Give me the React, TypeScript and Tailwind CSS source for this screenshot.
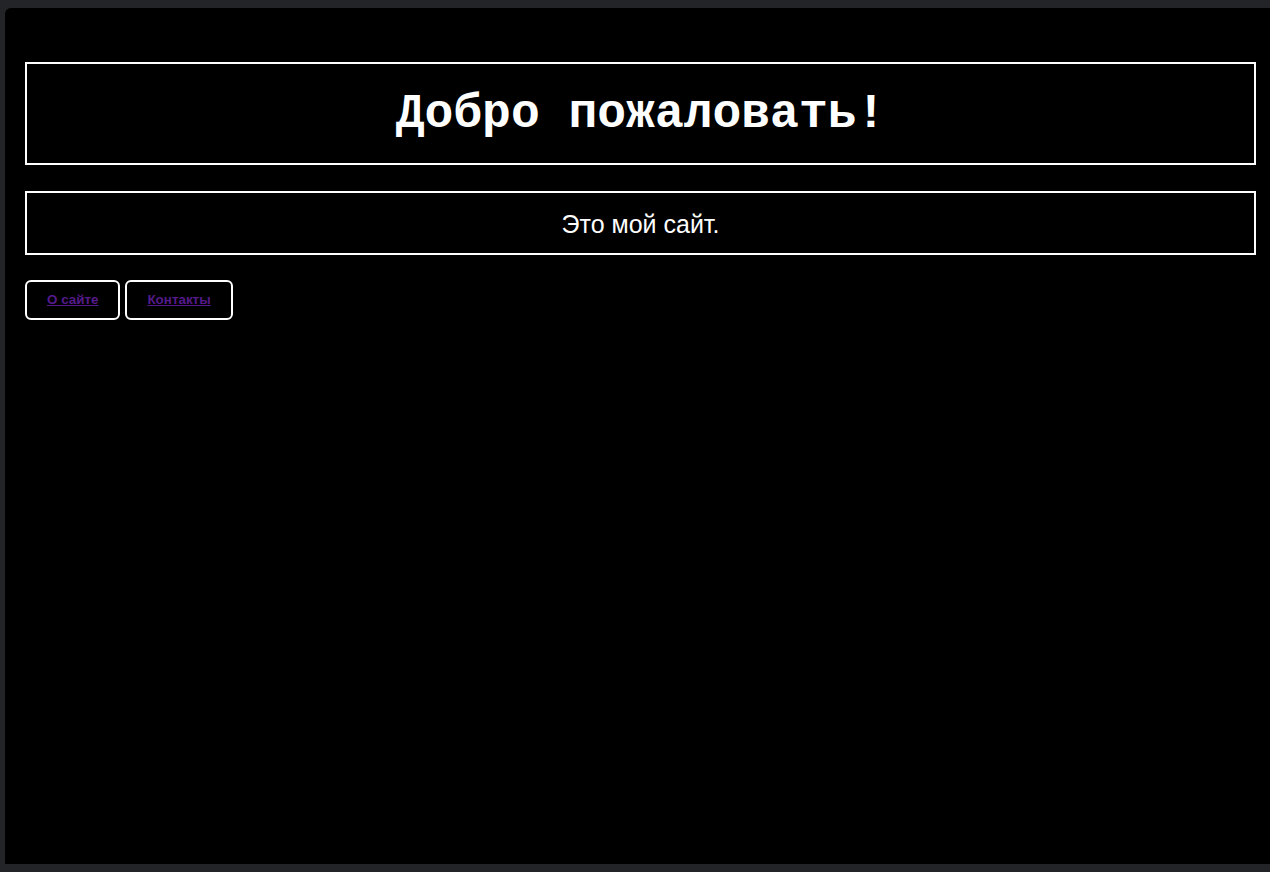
import React from 'react';

const links = [
  { label: 'О сайте', href: '#about' },
  { label: 'Контакты', href: '#contacts' },
];

export default function App() {
  return (
    <div className="w-[1270px] h-[872px] bg-[#232427] pt-[8px] pl-[5px] pb-[8px] overflow-hidden">
      <div className="h-full bg-black rounded-tl-[6px] pl-5 pr-[14px] pt-[54px]">
        <header className="h-[103px] border-2 border-white flex items-center justify-center">
          <h1 className="text-white text-[48px] leading-none font-bold font-['Courier_New','Liberation_Mono',monospace]">
            Добро пожаловать!
          </h1>
        </header>

        <section className="mt-[26px] h-[64px] border-2 border-white flex items-center justify-center">
          <p className="text-white text-[25px] leading-none pt-[2px] font-['Arial','Liberation_Sans',sans-serif]">
            Это мой сайт.
          </p>
        </section>

        <nav className="mt-[25px] flex gap-[5px]">
          {links.map((l) => (
            <a
              key={l.label}
              href={l.href}
              className="h-[40px] px-5 border-2 border-white rounded-[6px] flex items-center text-[13.4px] font-bold underline text-[#551a8b] font-['Arial','Liberation_Sans',sans-serif]"
            >
              {l.label}
            </a>
          ))}
        </nav>
      </div>
    </div>
  );
}
